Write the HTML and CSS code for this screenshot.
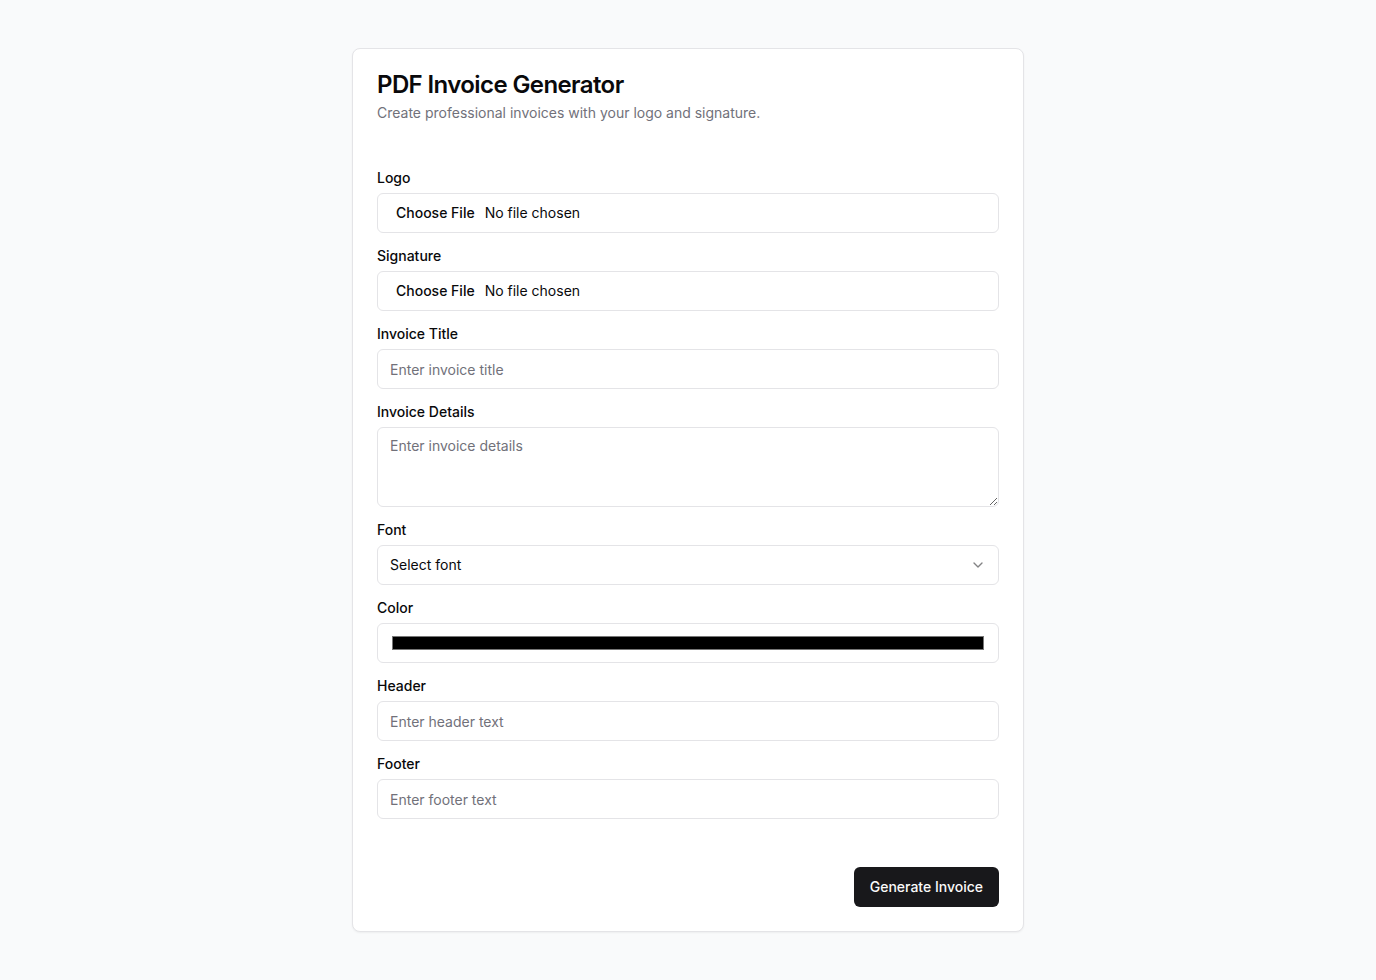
FILE: index.html
```html
<!DOCTYPE html>
<html lang="en">
<head>
<meta charset="utf-8">
<title>PDF Invoice Generator</title>
<link rel="stylesheet" href="styles.css">
</head>
<body>
<main class="page">
  <section class="card">
    <header class="card-header">
      <h1 class="card-title">PDF Invoice Generator</h1>
      <p class="card-desc">Create professional invoices with your logo and signature.</p>
    </header>
    <div class="card-content">
      <form class="form">
        <div class="group">
          <label class="label" for="logo">Logo</label>
          <input class="input file" id="logo" type="file">
        </div>
        <div class="group">
          <label class="label" for="sig">Signature</label>
          <input class="input file" id="sig" type="file">
        </div>
        <div class="group">
          <label class="label" for="title">Invoice Title</label>
          <input class="input" id="title" type="text" placeholder="Enter invoice title">
        </div>
        <div class="group">
          <label class="label" for="details">Invoice Details</label>
          <textarea class="input textarea" id="details" placeholder="Enter invoice details"></textarea>
        </div>
        <div class="group">
          <label class="label">Font</label>
          <button type="button" class="input select">
            <span>Select font</span>
            <svg class="chev" width="16" height="16" viewBox="0 0 24 24" fill="none" stroke="currentColor" stroke-width="2" stroke-linecap="round" stroke-linejoin="round"><path d="m6 9 6 6 6-6"/></svg>
          </button>
        </div>
        <div class="group">
          <label class="label" for="color">Color</label>
          <input class="input color" id="color" type="color" value="#000000">
        </div>
        <div class="group">
          <label class="label" for="header">Header</label>
          <input class="input" id="header" type="text" placeholder="Enter header text">
        </div>
        <div class="group">
          <label class="label" for="footer">Footer</label>
          <input class="input" id="footer" type="text" placeholder="Enter footer text">
        </div>
      </form>
    </div>
    <footer class="card-footer">
      <button type="button" class="btn">Generate Invoice</button>
    </footer>
  </section>
</main>
</body>
</html>
```

FILE: styles.css
```css
* { box-sizing: border-box; }
html, body { margin: 0; padding: 0; }
body {
  background: #f9fafb;
  font-family: Inter, "Noto Sans", sans-serif;
  color: #09090b;
}
.page {
  min-height: 100vh;
  padding: 48px 0;
}
.card {
  width: 672px;
  margin: 0 auto;
  background: #fff;
  border: 1px solid #e4e4e7;
  border-radius: 8px;
  box-shadow: 0 1px 2px rgba(0,0,0,0.05);
}
.card-header {
  padding: 24px;
  display: flex;
  flex-direction: column;
  gap: 6px;
}
.card-title {
  margin: 0;
  font-size: 24px;
  line-height: 24px;
  font-weight: 600;
  letter-spacing: -0.6px;
}
.card-desc {
  margin: 0;
  font-size: 14px;
  line-height: 20px;
  color: #71717a;
}
.card-content {
  padding: 24px;
}
.form {
  display: flex;
  flex-direction: column;
  gap: 16px;
}
.group {
  display: flex;
  flex-direction: column;
  gap: 8px;
}
.label {
  font-size: 14px;
  line-height: 14px;
  font-weight: 500;
}
.input {
  display: flex;
  width: 100%;
  height: 40px;
  border: 1px solid #e4e4e7;
  border-radius: 6px;
  background: #fff;
  padding: 8px 12px;
  font-family: inherit;
  font-size: 14px;
  line-height: 20px;
  color: #09090b;
  outline: none;
}
.input::placeholder { color: #71717a; }
.file { padding-top: 9px; padding-bottom: 7px; }
.input::file-selector-button {
  border: 0;
  background: transparent;
  font-family: inherit;
  font-size: 14px;
  font-weight: 500;
  color: #09090b;
  padding: 1px 6px;
  margin-right: 4px;
}
.textarea {
  height: 80px;
  min-height: 80px;
  resize: vertical;
}
.select {
  align-items: center;
  justify-content: space-between;
  text-align: left;
  cursor: pointer;
}
.chev { opacity: 0.5; flex: none; }
.color { cursor: pointer; }
.card-footer {
  padding: 24px;
  display: flex;
  justify-content: flex-end;
}
.btn {
  height: 40px;
  padding: 8px 16px;
  border: 0;
  border-radius: 6px;
  background: #18181b;
  color: #fafafa;
  font-family: inherit;
  font-size: 14px;
  font-weight: 500;
  line-height: 20px;
  cursor: pointer;
}
```
